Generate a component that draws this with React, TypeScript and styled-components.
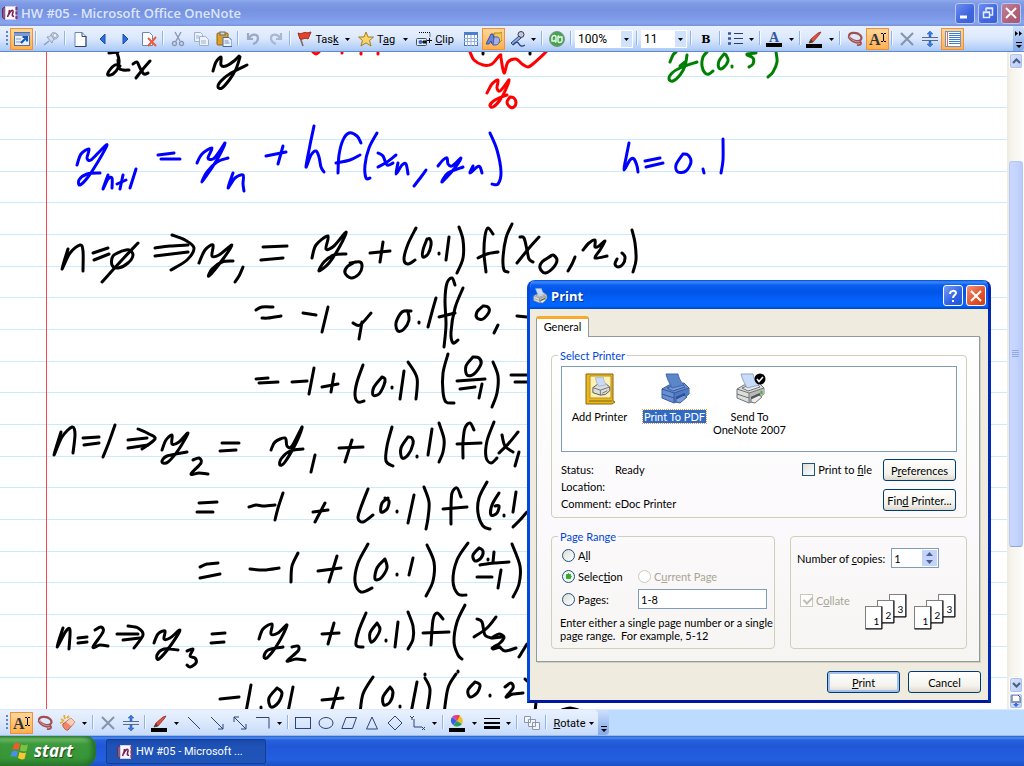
import React from 'react';
import styled, { createGlobalStyle } from 'styled-components';

const GlobalStyle = createGlobalStyle`
  * { box-sizing: border-box; }
  html, body { margin: 0; height: 100%; }
  body { overflow: hidden; background: #fff; }
  body, button, input, select { font-family: Roboto, "Liberation Sans", sans-serif; font-size: 11px; color: #000; }
  button { padding: 0; border: 0; background: none; }
  svg { display: block; flex: none; }
  u { text-underline-offset: 1px; }
`;

/* ---------- window frame ---------- */

const Page = styled.div`
  display: grid;
  grid-template-rows: 26px 26px minmax(0, 1fr) 27px 30px;
  min-width: 0;
  height: 100vh;
`;

const TitleBar = styled.header`
  display: flex;
  align-items: center;
  gap: 3px;
  padding: 0 3px 0 2px;
  background: linear-gradient(#8fa9ea 0, #7f9ce6 3px, #7691e0 10px, #7d99e8 17px, #86a6ee 23px, #7891dc 26px);
`;

const Title = styled.h1`
  flex: 1;
  margin: 0;
  font: 600 13px/18px "Open Sans", "Noto Sans", sans-serif;
  color: #dce6fb;
  white-space: nowrap;
`;

const CaptionButton = styled.button<{ $tone: 'pale' | 'blue' | 'dull' | 'red' }>`
  display: grid;
  place-items: center;
  width: 20px;
  height: 21px;
  border: 1px solid ${p => (p.$tone === 'pale' || p.$tone === 'dull' ? '#b8c8f2' : '#fff')};
  border-radius: 3px;
  background: ${p =>
    ({
      pale: 'linear-gradient(135deg, #6d8ef0, #3f66e0 60%, #3d62d2)',
      dull: 'linear-gradient(135deg, #c0829a, #b2607a 60%, #a4586e)',
      blue: 'linear-gradient(135deg, #7a9cf4, #2f61e4 60%, #2456d8)',
      red: 'linear-gradient(135deg, #f0917a, #e2512a 60%, #cf3f14)',
    })[p.$tone]};
`;

const CaptionButtons = styled.div`
  display: flex;
  gap: 3px;
`;

/* ---------- toolbars ---------- */

const ToolStrip = styled.div`
  display: flex;
  align-items: stretch;
  height: 26px;
  background: linear-gradient(#e9f1fe, #dbe8fc 50%, #b4d0f8 90%, #a8c6f2);
  border-bottom: 1px solid #5f8ace;
`;

const DrawStrip = styled(ToolStrip)`
  height: 27px;
  border-top: 1px solid #d9e9ff;
  border-bottom: 1px solid #9dbbe8;
  background: #bddaff;
`;

const DrawTools = styled.div`
  display: flex;
  border-radius: 0 4px 4px 0;
  background: linear-gradient(#e9f1fe, #dbe8fc 50%, #c6dbfa);
`;

const Grip = styled.span`
  flex: none;
  width: 4px;
  margin: 5px 0 5px 6px;
  background: repeating-linear-gradient(#5b86cc 0 2px, transparent 2px 4px) 0 0 / 2px 100% no-repeat;
`;

const Tool = styled.button<{ $w?: number; $on?: boolean }>`
  display: flex;
  flex: none;
  align-items: center;
  justify-content: center;
  gap: 3px;
  width: ${p => p.$w ?? 23}px;
  margin: 2px 0 1px;
  border: 1px solid ${p => (p.$on ? '#f0913a' : 'transparent')};
  background: ${p => (p.$on ? 'linear-gradient(#fed79a, #ffb04e)' : 'none')};
  white-space: nowrap;
`;

const Separator = styled.span`
  flex: none;
  width: 6px;
  margin: 5px 0 6px;
  background: linear-gradient(90deg, transparent 2px, #8fb4ea 2px 3px, #f5f9ff 3px 4px, transparent 4px);
`;

const DropWrap = styled.span<{ $w: number }>`
  position: relative;
  flex: none;
  width: ${p => p.$w}px;
  margin: 4px 1px 3px;
  background: #fff;
  svg {
    position: absolute;
    right: 4px;
    top: 8px;
    pointer-events: none;
  }
  &::after {
    content: '';
    position: absolute;
    inset: 1px 1px 1px auto;
    width: 11px;
    background: #cfe1fb;
    pointer-events: none;
  }
  svg { z-index: 1; }
`;

const DropSelect = styled.select`
  appearance: none;
  width: 100%;
  height: 100%;
  padding: 0 12px 0 3px;
  border: 0;
  background: transparent;
  font-size: 12px;
`;

const Overflow = styled.button<{ $push?: boolean }>`
  display: flex;
  flex-direction: column;
  align-items: center;
  justify-content: space-between;
  width: 11px;
  margin-left: ${p => (p.$push ? 'auto' : '0')};
  padding: 5px 0 3px;
  border-radius: 0 4px 4px 0;
  background: linear-gradient(#cfe0fb, #9dbdf0 60%, #86aae8);
`;

/* ---------- note page ---------- */

const Workspace = styled.main`
  position: relative;
  display: flex;
  min-height: 0;
`;

const Paper = styled.section`
  position: relative;
  flex: 1;
  min-width: 0;
  overflow: hidden;
  background:
    linear-gradient(90deg, transparent 46px, #f8484e 46px 47px, transparent 47px),
    linear-gradient(transparent 24px, #c9ebfd 24px 25px, transparent 25px 55px, #c9ebfd 55px 56px, transparent 56px 87px, #c9ebfd 87px 88px, transparent 88px) 0 0 / 100% 95px,
    #fff;
`;

const InkLayer = styled.svg`
  position: absolute;
  left: 0;
  top: 0;
`;

const ScrollBar = styled.div`
  display: flex;
  flex-direction: column;
  width: 17px;
  padding: 1px 1px 0 2px;
  background: linear-gradient(90deg, #eeeade, #f6f4ee 5px, #fdfdfb);
`;

const ScrollButton = styled.button`
  display: grid;
  flex: none;
  place-items: center;
  height: 16px;
  border: 1px solid #fff;
  border-radius: 3px;
  outline: 1px solid #aec2f0;
  outline-offset: -2px;
  background: linear-gradient(135deg, #dbe5fe, #b8cbf8);
`;

const ScrollTrack = styled.div`
  display: flex;
  flex-direction: column;
  flex: 1;
`;

const ScrollThumb = styled.div`
  display: grid;
  flex: 385;
  place-items: center;
  border: 1px solid #b4c8f6;
  border-bottom-color: #8ea6dc;
  border-radius: 3px;
  background: linear-gradient(90deg, #c9d8fd, #c3d3fd 60%, #b6c9fa);
`;

const TrackGap = styled.div<{ $share: number }>`
  flex: ${p => p.$share};
`;

/* ---------- print dialog ---------- */

const Dialog = styled.form`
  position: absolute;
  left: 527px;
  top: 228px;
  width: 464px;
  border: solid #0048e0;
  border-width: 0 3px 3px;
  border-right-color: #0028b4;
  border-bottom-color: #0018a0;
  border-radius: 8px 8px 0 0;
  background: #efebde;
  overflow: hidden;
  &, button, input { font-family: Lato, Roboto, sans-serif; }
`;

const DialogTitle = styled.div`
  display: flex;
  align-items: center;
  gap: 3px;
  height: 29px;
  margin: 0 -3px;
  padding: 2px 5px 0;
  background: linear-gradient(#0048d8 0, #3b8cf8 2px, #0a5ff0 5px, #0054e6 12px, #0462fc 20px, #0066ff 26px, #0042c4 29px);
`;

const DialogName = styled.h2`
  flex: 1;
  margin: 0;
  font: 700 13px/18px "Open Sans", "Noto Sans", sans-serif;
  color: #fff;
  text-shadow: 1px 1px #0a2f8c;
`;

const DialogBody = styled.div`
  padding: 7px 7px 7px 6px;
`;

const Tab = styled.button`
  position: relative;
  display: block;
  width: 53px;
  height: 21px;
  border: 1px solid #919b9c;
  border-top: 3px solid #f9a92b;
  border-bottom: 0;
  border-radius: 3px 3px 0 0;
  background: #fff;
  line-height: 13px;
  padding-bottom: 3px;
`;

const TabPanel = styled.div`
  display: flex;
  flex-direction: column;
  gap: 12px;
  margin: -1px 1px 0 0;
  padding: 12px 12px 12px 14px;
  border: 1px solid #919b9c;
  box-shadow: 1px 1px #d3cfc0;
  background: linear-gradient(#fff, #fbf9fb 60%, #f6f5f2);
`;

const Group = styled.fieldset<{ $w?: number }>`
  min-width: 0;
  width: ${p => (p.$w ? p.$w + 'px' : 'auto')};
  margin: 0;
  padding: 0 8px;
  border: 1px solid #d2cfb9;
  border-radius: 4px;
`;

const Legend = styled.legend`
  margin-left: -2px;
  padding: 0 2px;
  line-height: 13px;
  color: #0046d5;
`;

const PrinterList = styled.ul`
  display: flex;
  height: 86px;
  margin: 4px 1px 0;
  padding: 6px 0 0;
  border: 1px solid #7f9db9;
  background: #fff;
  list-style: none;
`;

const PrinterItem = styled.li`
  display: flex;
  flex-direction: column;
  align-items: center;
  gap: 5px;
  width: 75px;
`;

const PrinterName = styled.span<{ $on?: boolean }>`
  padding: 0 1px;
  line-height: 13px;
  text-align: center;
  color: ${p => (p.$on ? '#fff' : '#000')};
  background: ${p => (p.$on ? '#316ac5' : 'none')};
  outline: ${p => (p.$on ? '1px dotted #e0a040' : 'none')};
  white-space: pre;
`;

const PrinterInfo = styled.div`
  display: flex;
  align-items: flex-start;
  justify-content: space-between;
  padding: 7px 2px 5px 1px;
`;

const Facts = styled.dl`
  display: grid;
  flex: 1;
  grid-template-columns: 54px 1fr;
  grid-auto-rows: 17px;
  align-items: center;
  margin: 2px 0 0;
  dd { margin: 0; }
`;

const Stack = styled.div`
  display: flex;
  flex-direction: column;
  gap: 8px;
  margin-left: 11px;
`;

const PushButton = styled.button<{ $default?: boolean }>`
  width: 73px;
  height: 22px;
  border: 1px solid #003c74;
  border-radius: 3px;
  background: linear-gradient(#fff, #f3f2ec 70%, #dcd8cc);
  box-shadow: ${p => (p.$default ? 'inset 0 0 0 2px #a3bff0' : 'none')};
`;

const Choice = styled.label<{ $off?: boolean }>`
  display: flex;
  align-items: center;
  gap: 3px;
  color: ${p => (p.$off ? '#a8a594' : '#000')};
`;

const Radio = styled.input.attrs({ type: 'radio', name: 'range' })`
  appearance: none;
  flex: none;
  width: 13px;
  height: 13px;
  margin: 0;
  border: 1px solid #1f5283;
  border-radius: 50%;
  background: linear-gradient(135deg, #dcdcd5, #fff);
  &:checked { background: radial-gradient(circle, #2fae2b 0 2px, #4fc24a 3px, #f4f4f0 3px); }
  &:disabled { border-color: #cac8bb; background: #fff; }
`;

const Check = styled.input.attrs({ type: 'checkbox' })`
  appearance: none;
  flex: none;
  width: 13px;
  height: 13px;
  margin: 0;
  border: 1px solid #1c5180;
  background: linear-gradient(135deg, #dcdcd7, #fff);
  &:disabled { border-color: #cac8bb; background: #fff; }
  &:checked::before {
    content: '';
    display: block;
    width: 4px;
    height: 7px;
    margin: 0 0 0 4px;
    border: solid #c0bdae;
    border-width: 0 2px 2px 0;
    transform: rotate(45deg);
  }
`;

const PrintToFile = styled(Choice)`
  margin-top: 4px;
`;

const Bottom = styled.div`
  display: flex;
  align-items: flex-end;
  justify-content: space-between;
`;

const RangeGrid = styled.div`
  display: grid;
  grid-template-columns: 76px 1fr;
  grid-template-rows: 20px 22px 24px;
  align-items: center;
  padding: 2px 0 0 2px;
`;

const Field = styled.input`
  min-width: 0;
  height: 20px;
  padding: 0 2px;
  border: 1px solid #7f9db9;
  background: #fff;
`;

const PagesField = styled(Field)`
  width: 129px;
`;

const Hint = styled.p`
  margin: 5px 0 6px;
  line-height: 13px;
  white-space: pre;
`;

const CopiesGroup = styled(Group)`
  height: 113px;
  padding: 11px 10px 0 6px;
`;

const CopiesRow = styled.div`
  display: flex;
  align-items: center;
  gap: 6px;
`;

const Spinner = styled.span`
  display: flex;
  width: 48px;
  border: 1px solid #7f9db9;
  background: #fff;
`;

const SpinField = styled.input`
  width: 30px;
  height: 18px;
  padding: 0 2px;
  border: 0;
  background: none;
`;

const SpinButtons = styled.span`
  display: flex;
  flex-direction: column;
  margin: 1px 0;
`;

const SpinButton = styled.button`
  display: grid;
  place-items: center;
  width: 15px;
  height: 8px;
  background: #c3d3fb;
`;

const CollateRow = styled.div`
  display: flex;
  align-items: flex-start;
  justify-content: space-between;
  margin-top: 26px;
  padding-left: 3px;
`;

const PageStacks = styled.span`
  display: flex;
  gap: 7px;
`;

const Footer = styled.div`
  display: flex;
  justify-content: flex-end;
  gap: 8px;
  margin-top: 9px;
`;

/* ---------- taskbar ---------- */

const TaskBar = styled.footer`
  display: flex;
  align-items: stretch;
  background: linear-gradient(#2a5fcf 0, #4a8cf2 2px, #2762dc 4px, #2157d7 10px, #2260e0 24px, #1c4fc0 30px);
`;

const StartButton = styled.button`
  display: flex;
  align-items: center;
  gap: 4px;
  width: 96px;
  padding: 0 0 1px 10px;
  border-radius: 0 10px 12px 0;
  background: linear-gradient(#3a8a3a 0, #6cb866 3px, #3c9a3c 8px, #379537 22px, #2a7a2c 30px);
  box-shadow: inset -4px 0 5px #24702a;
  color: #fff;
  font: italic 700 17px/20px "Open Sans", sans-serif;
  text-shadow: 1px 1px 1px #1c4a1c;
`;

const TaskButton = styled.button`
  display: flex;
  align-items: center;
  gap: 3px;
  width: 160px;
  margin: 3px 0 2px 10px;
  padding-left: 10px;
  border: 1px solid #163d94;
  border-radius: 2px;
  background: linear-gradient(#1a48a8, #1e52b7 6px, #1f54b8);
  color: #fff;
`;

/* ---------- icons ---------- */

const icons: Record<string, React.ReactNode> = {
  onenote: (
    <>
      <path d="M0.500 3.500 4 1v14L.500 12.500z" fill="#8a5a86" stroke="#6a2c5c" />
      <rect x="3.500" y="1.500" width="10" height="13" fill="#fdfbff" stroke="#d8cce4" />
      <path d="M14.500 2v3M14.500 6.500v3M14.500 11v3" stroke="#8a3468" strokeWidth="2" />
      <path d="M5.500 12c1-2 2-4 2-7M6.500 10c2-5 5-6 4.500-3-.500 2-1.500 5 1 4" fill="none" stroke="#7a2050" strokeWidth="1.600" />
    </>
  ),
  nav: (
    <>
      <rect x="0.500" y="1.500" width="15" height="13" fill="#eaf0fb" stroke="#4c6eae" />
      <path d="M0 2h16v3H0z" fill="#7f9acb" />
      <path d="M2 8h5M2 11h5" stroke="#b8c6e0" strokeWidth="2" />
      <path d="m7 12 5-5M8.500 6H13v4.500" stroke="#1458b4" strokeWidth="2.200" fill="none" />
    </>
  ),
  pin: (
    <>
      <path d="m1 14 5-4" stroke="#8e9cb6" strokeWidth="1.500" />
      <path d="M4 6c2 0 3-1 4-2 0-2 2-3 4-2 2 0 4 3 3 4-1 2-2 2-4 2-1 1-1 2-2 4z" fill="#d3dbea" stroke="#8e9cb6" />
      <path d="m8 4 3 4" stroke="#8e9cb6" />
      <circle cx="12" cy="4.500" r="2" fill="#eef2f9" stroke="#9aa8c0" />
    </>
  ),
  page: (
    <>
      <path d="M3 1.500h7l4 4v10H3z" fill="#fdfeff" stroke="#6b86b5" />
      <path d="M10 1.500v4h4M14 5v10.500H3" fill="none" stroke="#30466e" />
    </>
  ),
  prev: <path d="M10 3v10L5 8z" fill="#2c6ce0" stroke="#1c4fb4" />,
  next: <path d="M5 3v10l5-5z" fill="#2c6ce0" stroke="#1c4fb4" />,
  delPage: (
    <>
      <path d="M1.500 1.500h7l3 3v10h-10z" fill="#fdfeff" stroke="#6b86b5" />
      <path d="m7 7 8 8M15 6l-8 9" stroke="#ee5a3c" strokeWidth="2" />
    </>
  ),
  cut: (
    <g fill="none" stroke="#8b99b3" strokeWidth="1.400">
      <path d="m5 1 5 9M11 1 6 10" />
      <circle cx="4.500" cy="12.500" r="2" />
      <circle cx="11.500" cy="12.500" r="2" />
    </g>
  ),
  copy: (
    <g fill="#eef3fb" stroke="#9fb0cc">
      <path d="M1.500 1.500h6l2 2v7h-8z" />
      <path d="M6.500 5.500h6l3 3v6h-9z" />
      <path d="M8 10h5M8 12h5M3 5h3M3 7h3" />
    </g>
  ),
  paste: (
    <>
      <rect x="1" y="2" width="11" height="12" rx="1" fill="#d9a02c" stroke="#94660c" />
      <rect x="4" y="1" width="5" height="3" fill="#d8d8d8" stroke="#6a6a6a" />
      <path d="M7 6.500h6l3 3v6H7z" fill="#eef4ff" stroke="#4a68a4" />
      <path d="M8.500 10h4M8.500 12h5" stroke="#6f8cc0" />
    </>
  ),
  undo: <path d="M3 2v6h5M4 7c3-5 9-4 9 0 0 3-2 5-5 6" fill="none" stroke="#9aaac6" strokeWidth="2.200" />,
  redo: <path d="M13 2v6H8M12 7C9 2 3 3 3 7c0 3 2 5 5 6" fill="none" stroke="#a9b8d2" strokeWidth="2.200" />,
  flag: (
    <>
      <path d="m3 3 4 12" stroke="#7a6a64" strokeWidth="1.600" />
      <path d="M2 2c4 2 6-2 9 0l4-1-3 7c-3-2-5 1-8 0z" fill="#e2442c" stroke="#a82818" />
    </>
  ),
  star: <path d="m8 1 2 5h5.500l-4 3.500L13 15l-5-3.200L3 15l1.500-5.500L.500 6H6z" fill="#fad56a" stroke="#a87c20" />,
  clip: (
    <>
      <path d="M3 1.500h11v5" fill="none" stroke="#000" strokeDasharray="1 1" />
      <rect x="0.500" y="7.500" width="10" height="7" rx="1" fill="#e7ecf6" stroke="#44506a" />
      <circle cx="4.500" cy="11" r="2" fill="#2e6cc0" />
      <path d="M7 10h3v2H7zM11 9.500h5M13.500 7v5" fill="#333" stroke="#000" />
    </>
  ),
  table: (
    <>
      <rect x="1.500" y="1.500" width="13" height="13" fill="#fff" stroke="#4c74bc" />
      <path d="M1 1h14v3H1z" fill="#4c7ed0" />
      <path d="M1 7.500h14M1 10.500h14M4.500 4v11M8 4v11M11.500 4v11" stroke="#93b0e0" />
    </>
  ),
  shapes: (
    <>
      <path d="M8 2h6l2-1v8l-3 3H8z" fill="#f2c94e" stroke="#b08a20" />
      <path d="m0 13 5-10h2l2 10H6l-1-3-2 3z" fill="#6b86dc" stroke="#3b4f9e" />
      <path d="M8 6h3c4 0 3 8-1 8H7z" fill="#a3b2ea" stroke="#4a5ca8" />
    </>
  ),
  mic: (
    <>
      <circle cx="12" cy="3.500" r="3" fill="#c2c8d4" stroke="#353f56" />
      <path d="m10 5-8 7 2 2 8-7z" fill="#8fa8d8" stroke="#2c4784" />
      <path d="M4 14c3-4 5-3 6-1s3 3 6 1" fill="none" stroke="#2c4784" strokeWidth="1.400" />
    </>
  ),
  sync: (
    <>
      <circle cx="8" cy="8" r="7.500" fill="#46a252" stroke="#7c9480" />
      <path d="M3 6c1-2 4-2 4 0v5M5 9l2 2.500M3 6v4h2M13 10c-1 2-4 2-4 0V5M11 7 9 4.500M13 10V6h-2" fill="none" stroke="#e8ffe8" strokeWidth="1.400" />
    </>
  ),
  bullets: (
    <>
      <path d="M1 2.500h3M1 7.500h3M1 12.500h3" stroke="#34589c" strokeWidth="2.500" />
      <path d="M7 2.500h9M7 7.500h9M7 12.500h9" stroke="#2b3e66" />
    </>
  ),
  lasso: (
    <g fill="none">
      <path d="M13 11c-4 2-11-2-11-6s8-4 11-1 1 7-4 6-5-3-8-4" stroke="#a05050" strokeWidth="2.200" />
      <path d="M12 10c3 1 3 5-2 4" stroke="#a05050" strokeWidth="1.800" />
      <path d="M12.500 10.500c-4 1-10-2-10-5.500" stroke="#d69a94" />
    </g>
  ),
  cross: <path d="m2 2 12 12M14 2 2 14" stroke="#8593ac" strokeWidth="2" />,
  split: (
    <>
      <path d="M0 6.500h16M0 9.500h16" stroke="#5a6a8a" />
      <path d="m8 0 3 3H9v3H7V3H5zM8 16l3-3H9v-3H7v3H5z" fill="#3a7ae0" stroke="#2458b0" strokeWidth=".5" />
    </>
  ),
  ruled: (
    <>
      <rect x="0.500" y="0.500" width="15" height="15" fill="#fff" stroke="#6f92cc" />
      <path d="M4 2.500h11M4 4.500h11M4 6.500h11M4 8.500h11M4 10.500h11M4 12.500h11" stroke="#3a7ed8" />
      <path d="M2.500 1v14" stroke="#e06a5a" />
    </>
  ),
  eraser: (
    <>
      <path d="m3 9 8-6 4 4-7 8c-2 1-6-3-5-6z" fill="#f2866a" stroke="#c0583c" />
      <path d="m6 7 5-4 4 4-4 4z" fill="#fbcdb8" />
      <path d="m1 4 3 2M4 0l1 4M0 8l3-1M9 1 7 3" stroke="#e8b020" strokeWidth="1.800" />
    </>
  ),
  line: <path d="m2 2 12 12" stroke="#2b4476" />,
  arrowLine: <path d="m2 2 12 12M14 9v5H9" fill="none" stroke="#2b4476" />,
  doubleArrow: <path d="m2 2 12 12M14 9v5H9M2 7V2h5" fill="none" stroke="#2b4476" />,
  elbow: <path d="M1 2.500h13v11" fill="none" stroke="#2b4476" />,
  rect: <rect x="0.500" y="2.500" width="15" height="11" fill="none" stroke="#2b4476" />,
  ellipse: <ellipse cx="8" cy="8" rx="7" ry="5.500" fill="none" stroke="#2b4476" />,
  para: <path d="M5 2.500h10.500l-4 11H.800z" fill="none" stroke="#2b4476" />,
  triangle: <path d="m8 2 5.500 12h-11z" fill="none" stroke="#2b4476" />,
  diamond: <path d="m8 1 7 7-7 7-7-7z" fill="none" stroke="#2b4476" />,
  axes: <path d="M4 4v8h8M0 1l2 2 2-2M2 3v2M12 12l3 3M15 12l-3 3" fill="none" stroke="#2b4476" />,
  weights: (
    <>
      <path d="M0 3.500h16" stroke="#000" />
      <path d="M0 8h16" stroke="#000" strokeWidth="2" />
      <path d="M0 12.500h16" stroke="#000" strokeWidth="3" />
    </>
  ),
  group: (
    <g fill="#f0f4fb" stroke="#8d97a8">
      <path d="M.500 1.500h6v6h-6zM4.500 4.500h7v7h-7zM8.500 7.500h7v7h-7z" />
    </g>
  ),
};

const Icon = ({ name, size = 16 }: { name: string; size?: number }) => (
  <svg width={size} height={size} viewBox="0 0 16 16" aria-hidden="true">
    {icons[name]}
  </svg>
);

const FontColor = () => (
  <svg width="17" height="20" viewBox="0 0 17 20" aria-hidden="true">
    <text x="8" y="13" textAnchor="middle" fontFamily="Liberation Serif, serif" fontWeight="700" fontSize="14" fill="#34589c">A</text>
    <path d="M0 14h16v4H0z" />
  </svg>
);

const Pen = () => (
  <svg width="17" height="17" viewBox="0 0 17 17" aria-hidden="true">
    <path d="m3 12 2-4 7-6 3-1-2 3-6 7z" fill="#e4503c" stroke="#8c3024" strokeWidth=".8" />
    <path d="m3 12 2-4 2 3z" fill="#4b3a36" />
    <path d="M0 13h16v4H0z" />
  </svg>
);

const Palette = () => (
  <svg width="17" height="17" viewBox="0 0 17 17" aria-hidden="true">
    <path d="M8 6V0a6 6 0 0 1 5 9z" fill="#f0c030" />
    <path d="M8 6 13 9a6 6 0 0 1-9 1z" fill="#2c9c5c" />
    <path d="M8 6 4 10a6 6 0 0 1-1-8z" fill="#3a5ee0" />
    <path d="M8 6 3 2a6 6 0 0 1 5-2z" fill="#e040a0" />
    <path d="M8 6 11 .500a6 6 0 0 0-3-.500z" fill="#e84828" />
    <path d="M0 13h16v4H0z" />
  </svg>
);

const TextTool = () => (
  <svg width="18" height="18" viewBox="0 0 18 18" aria-hidden="true">
    <text x="0" y="15" fontFamily="Liberation Serif, serif" fontWeight="700" fontSize="16" fill="#30343c">A</text>
    <path d="M12 3.500h2M15 3.500h2M14.500 4v7M12 11.500h2M15 11.500h2" stroke="#000" />
  </svg>
);

const BoldTool = () => (
  <svg width="14" height="16" viewBox="0 0 14 16" aria-hidden="true">
    <text x="7" y="12" textAnchor="middle" fontFamily="DejaVu Serif, serif" fontWeight="700" fontSize="11">B</text>
  </svg>
);

const DownMark = () => (
  <svg width="5" height="3" viewBox="0 0 5 3" aria-hidden="true">
    <path d="M0 0h5L2.500 3z" />
  </svg>
);

const Arrow = ({ label }: { label: string }) => (
  <Tool $w={11} type="button" aria-label={label}>
    <DownMark />
  </Tool>
);

const Chevron = ({ up, size = 9 }: { up?: boolean; size?: number }) => (
  <svg width={size} height={size - 3} viewBox="0 0 9 6" aria-hidden="true">
    <path d={up ? 'M1 5l3.500-3.500L8 5' : 'M1 1l3.500 3.500L8 1'} fill="none" stroke="#4d6185" strokeWidth="2.200" />
  </svg>
);

const SpinMark = ({ up }: { up?: boolean }) => (
  <svg width="7" height="4" viewBox="0 0 7 4" aria-hidden="true">
    <path d={up ? 'M0 4 3.500 0 7 4z' : 'M0 0h7L3.500 4z'} fill="#4d6185" />
  </svg>
);

const Windows = () => (
  <svg width="20" height="18" viewBox="0 0 20 18" aria-hidden="true">
    <path d="M4 2c3-2 4-1 6 0L8.500 8c-2-1-4-1-6 0z" fill="#ee5a2a" />
    <path d="M11 2.500c3 1 4 1 7 0L16.500 9c-3 1-5 0-6.500-.500z" fill="#7fc242" />
    <path d="M2 9.500c3-1 4-1 6 0L6.500 15c-2-1-4-1-6 0z" fill="#4a8ef0" />
    <path d="M9.500 10c2 1 4 1.500 6.500.500L14.500 17c-3 1-4 0-6.500-1z" fill="#fbc72c" />
  </svg>
);

const tones = {
  grey: { paper: '#c8dcfa', paperEdge: '#8fa6c8', top: '#ecece9', side: '#b9bab8', front: '#dcdcda', edge: '#707478', tray: '#505458' },
  blue: { paper: '#5b86c8', paperEdge: '#3f66b0', top: '#7a9bd6', side: '#4f7abf', front: '#6a8fd0', edge: '#345a9f', tray: '#2c509c' },
};

const Printer = ({ tone = 'grey', size = 32 }: { tone?: 'grey' | 'blue'; size?: number }) => {
  const c = tones[tone];
  return (
    <svg width={size} height={size} viewBox="0 0 32 32" aria-hidden="true">
      <path d="m3 16 7-4 15-2 5 5v6l-8 6-7 3-12-5z" fill={c.front} stroke={c.edge} />
      <path d="m15 20 15-5v6l-7 6-8 2z" fill={c.side} />
      <path d="m3 16 12 4 15-5M15 20v9M3 21l12 4" fill="none" stroke={c.edge} />
      <path d="m8 15 5-2 10-2 3 3-12 4z" fill={c.top} stroke={c.edge} />
      <path d="M7 1h12c1 4 2 7 6 11l-12 3C11 11 8 6 7 1z" fill={c.paper} stroke={c.paperEdge} />
      <path d="m17 26 8-4 3 2-7 6-4-1z" fill={c.top} stroke={c.edge} />
      <path d="m17 25 9-4" stroke={c.tray} strokeWidth="2" />
      {tone === 'grey' && <path d="M27.500 18v3" stroke="#35b835" strokeWidth="2" />}
    </svg>
  );
};

const AddPrinter = () => (
  <svg width="32" height="32" viewBox="0 0 32 32" aria-hidden="true">
    <path d="M2 1h27v27l2 1-3 2H2z" fill="#e8b820" stroke="#8a6408" />
    <path d="M6 3h21v22H6z" fill="#fff0b4" stroke="#b8901c" />
    <path d="M5 28h23" stroke="#8a6408" />
    <svg x="7" y="4" width="20" height="20" viewBox="0 0 32 32">
      <path d="m3 17 7-5 14-1 6 5v6l-7 6-8 1-12-4z" fill="#dcdcd8" stroke="#55585c" strokeWidth="1.500" />
      <path d="m3 17 12 4 15-5M15 21v8M18 26l8-4" fill="none" stroke="#6c7076" strokeWidth="1.500" />
      <path d="M7 1h13c0 4 1 7 5 11l-12 3C9 11 8 6 7 1z" fill="#c8dcfa" stroke="#8fa6c8" />
    </svg>
  </svg>
);

const DefaultPrinter = () => (
  <svg width="32" height="32" viewBox="0 0 32 32" aria-hidden="true">
    <Printer />
    <circle cx="26" cy="6" r="5.500" fill="#000" />
    <path d="m23 6 2 2.500L29 4" fill="none" stroke="#fff" strokeWidth="1.600" />
  </svg>
);

const CollatedPages = () => (
  <svg width="42" height="36" viewBox="0 0 42 36" role="img" aria-label="Pages 1, 2, 3">
    {[3, 2, 1].map(n => {
      const x = (n - 1) * 12 + 0.5;
      const y = (3 - n) * 6 + 0.5;
      return (
        <g key={n}>
          <rect x={x} y={y} width="16" height="22" fill="#fff" stroke="#808080" />
          <path d={`M${x} ${y + 22.5}h16.500v-22.500`} fill="none" stroke="#000" />
          <text x={x + 11} y={y + 18} textAnchor="middle" fontSize="10">{n}</text>
        </g>
      );
    })}
  </svg>
);

/* ---------- handwriting ---------- */

type Note = { color: string; label: string; ink: string };

// Pen strokes as "x y x y ..." point lists; a slash lifts the pen.
const notes: Note[] = [
  {
    color: '#000',
    label: 'dx, y',
    ink:
      '109 53 118 52/120 66 115 65 109 71 108 75 113 74 118 68 119 60 117 53/118 60 119 68 123 70 129 70/133 64 137 62 140 68 144 74 148 73/150 61 143 69 136 78' +
      '/213 71 216 62 221 57 221 65 226 66 234 61 239 56/240 57 236 69 230 79 222 88 218 87 221 81 231 73 247 65/483 53/530 53',
  },
  {
    color: '#f00',
    label: 'y sub 0',
    ink:
      '313 52 316 54 319 52/342 52/361 53/378 53/470 52 474 60 483 65 492 64 500 55 501 58 504 73 508 62 516 59 522 64 528 67 534 63 546 52' +
      '/487 93 492 84 498 80 497 88 500 91 506 84 509 80 506 89 500 100 493 107 490 105 495 100 507 95/510 97 507 102 510 107 514 107 516 103 514 98 510 97',
  },
  {
    color: '#008000',
    label: 'y(0.5)',
    ink:
      '670 62 673 55 676 52/687 55 685 66 680 75 673 81 669 79 672 73 680 68 697 62/680 66 685 62/707 52 703 57 702 66 705 73 709 74 713 71' +
      '/724 54 719 61 719 68 723 68 728 61 726 55 724 54/732 66/747 54 756 53/747 55 753 58 753 64 749 67/776 52 777 62 773 72 768 77',
  },
  {
    color: '#00f',
    label: 'y sub n+1 = y sub n + h f(x sub n, y sub n), h = 0.1',
    ink:
      '77 165 81 154 89 149 87 158 91 160 101 150 107 145 99 160 88 177 80 185 79 180 87 174 100 173/108 175 103 189 108 179 112 178 112 188/123 175 120 189/117 184 126 180/136 169 130 188' +
      '/158 155 174 153/161 159 180 159/197 163 202 154 212 148 208 158 213 159 219 152 225 143 218 158 209 172 202 182 207 172 217 162 228 158/233 173 228 188 235 178 243 175 243 184 244 191' +
      '/266 156 286 152/283 146 278 164/314 126 310 145 306 167 311 155 316 151 319 157 321 167 324 172/361 143 357 136 349 133 343 140 339 155 338 173/336 163 350 160 360 155' +
      '/377 133 369 148 365 165 366 178 370 178/378 153 383 156 387 165 393 163/396 155 387 162 378 167/398 163 396 174 402 165 406 164 408 174/426 170 421 177 414 186' +
      '/438 166 443 160 447 158 448 164 452 166 461 158 454 169 442 182 448 173 463 167/473 166 470 173 477 167 480 167 482 173/490 133 497 150 501 172 498 184 492 184' +
      '/629 143 626 158 624 170 630 160 634 159 637 166 638 172/645 161 660 158/646 167 663 163/683 154 676 165 678 172 686 171 691 162 688 155 683 154/703 169 704 173/723 139 723 160 721 173',
  },
  {
    color: '#000',
    label: 'n = 0 implies y sub 1 = y sub 0 + (0.1) f(x sub 0, y sub 0)',
    ink:
      '68 249 62 269 70 253 80 245 83 251 83 271/93 253 108 248/94 260 109 254/122 251 113 256 112 265 118 268 128 263 133 255 129 250 122 251/138 243 121 261 102 282' +
      '/155 248 170 246 188 245/155 256 188 252/172 235 185 240 194 248 187 260 171 270/199 263 205 250 213 245 212 256 219 255 232 245 223 259 209 276 212 269 222 262 233 261' +
      '/243 267 239 276 235 282/263 247 287 246/261 260 283 258/312 258 316 245 328 236 326 249 334 246 346 232 340 246 329 263 319 271 324 262 334 255 346 254' +
      '/355 262 347 267 345 273 351 278 359 274 362 267 360 262 350 263/370 253 390 251/383 242 380 262/416 228 408 244 404 259 408 264 415 260/427 239 423 250 423 257 428 254 431 245 430 239 427 239/439 253/449 237 446 260' +
      '/459 227 463 240 463 258 457 273/493 234 488 228 485 236 484 253 486 272/478 258 487 254 498 252/512 224 506 238 503 258 504 270 508 272/520 237 524 238 527 250 529 259 533 262/539 237 530 247 517 263' +
      '/551 256 542 262 540 268 545 273 553 268 557 260 553 255 549 257/575 257 572 264 568 271/583 250 589 243 595 240 595 247 599 246 605 241 600 250 595 258 607 256/622 253 625 257 623 264 618 267 615 264 617 259/632 230 635 243 636 260 633 272',
  },
  {
    color: '#000',
    label: '= -1 + 0.1 f(0, -',
    ink:
      '256 310 262 307 273 307/262 318 268 318 281 316/303 313 316 315/328 307 322 332/353 323 360 325 371 313/362 322 359 339/411 311 402 312 396 323 398 331 404 329 409 320 408 312/419 322/436 298 432 312 428 327' +
      '/455 285 452 278 447 283 445 300 446 325 444 347/439 317 455 313/463 288 455 308 451 332 453 343 458 340/483 306 477 312 477 318 483 319 489 312 488 307 483 306/498 325 494 333/517 316 527 317',
  },
  {
    color: '#000',
    label: '= -1 + (0.1) (0 over -1) =',
    ink:
      '256 379 268 378/259 383 278 382/292 382 307 381/314 368 309 394/322 387 338 384/334 374 331 392/363 365 357 382 355 395 358 402 364 401/382 377 374 387 373 395 379 394 384 385 385 379 382 377/392 387/404 371 400 399/408 362 417 378 416 399' +
      '/448 354 443 373 443 392 446 402 454 403/473 357 466 366 467 375 474 374 481 364 479 358 473 357/457 381 485 379/460 389 475 387/482 384 479 398/493 362 498 376 497 393 492 407/511 375 527 375/515 382 527 382',
  },
  {
    color: '#000',
    label: 'n = 1 implies y sub 2 = y sub 1 + (0.1) f(x sub 1,',
    ink:
      '61 432 54 455 62 437 72 427 75 434 73 453/83 438 99 437/84 445 99 443/115 425 109 442 103 457/128 440 147 438/128 448 148 445/138 429 149 434 155 439 142 449/162 450 166 440 172 435 172 444 179 442 188 433 179 449 168 462 162 462 167 456 187 452' +
      '/193 460 199 458 201 463 191 474 199 473 208 474/222 443 239 443/220 451 236 450/271 450 275 442 285 438 287 446 292 446 302 427 297 441 285 462 280 465 281 459 290 451 303 449/315 455 311 472/339 448 363 447/352 440 345 462' +
      '/392 427 387 446 386 461 393 466/408 437 401 448 402 458 408 455 413 444 412 438 408 437/417 456/432 429 428 455/439 423 444 439 443 452 439 462/474 430 470 423 465 428 463 442 463 458/457 444 481 443' +
      '/494 422 487 441 486 457 491 463 497 458/502 435 505 446 513 452/518 432 509 443 499 453/519 452 515 466',
  },
  {
    color: '#000',
    label: '= -1 + (0.1) f(0.1,',
    ink:
      '199 503 217 502/197 512 213 512/249 507 256 505 264 506 275 505/283 493 278 508 275 520/313 512 328 510/325 503 315 522/368 489 361 507 358 518 363 522 373 515/388 498 382 503 381 512 387 509 389 501 385 498/397 511/414 495 408 523' +
      '/424 487 429 502 428 518 426 529/461 497 457 488 452 493 451 508 451 524/443 509 467 507/487 482 479 498 478 513 483 526 490 529/499 493 492 505 491 515 497 513 499 506 495 506/504 515/516 492 513 512/527 512 520 520 513 527',
  },
  {
    color: '#000',
    label: '= -1 + (0.1) (0.1 over -1)',
    ink:
      '200 567 207 564 218 563/200 578 220 574/250 569 264 570 279 568/298 553 292 566 291 582/318 571 341 568/337 556 329 582/368 544 358 563 355 582 361 592 372 588/385 559 377 568 375 579 381 578 387 568 385 559/397 574/413 558 409 575' +
      '/427 545 434 562 433 581 426 596/468 543 457 560 453 581 458 594 466 595/479 548 473 555 475 561 481 558 483 551 479 548/488 559/494 552 493 562/480 565 494 563 509 562/477 577 492 577/501 570 498 588/512 544 520 566 519 584 513 597',
  },
  {
    color: '#000',
    label: 'n = 2 implies y sub 3 = y sub 2 + (0.1) f(x sub 2,',
    ink:
      '63 628 57 647 66 631 70 630 69 649/78 638 87 637/78 643 87 642/95 630 101 627 103 632 93 647 100 645 108 646/117 634 138 634/123 640 140 638/128 626 138 628 143 635 134 648/154 643 158 634 165 631 164 639 170 638 180 630 171 645 159 659 157 655 164 649 178 650' +
      '/187 651 193 649 190 656 195 658 196 663 190 667 187 665/212 634 225 633/211 643 224 642/259 639 263 629 272 624 271 634 278 633 287 625 279 642 268 657 264 657 268 650 283 647/292 647 298 646 298 651 287 661 296 659 305 660' +
      '/322 634 339 633/334 623 328 644/366 613 359 630 356 645 363 647/377 623 370 633 371 642 376 638 380 629 377 623/386 640/398 622 395 647/408 612 413 626 413 639 408 649/443 619 437 613 433 620 431 645/423 633 449 632' +
      '/465 605 457 622 454 642 458 655 462 659/477 619 482 622 485 635 492 638/496 617 487 628 474 637/493 637 499 634 504 637 500 643 492 648 499 647 505 651 516 648/493 638 502 637/493 649 500 647/527 644 519 657',
  },
  {
    color: '#000',
    label: '-1.01 + (0.1)(0.2',
    ink:
      '220 699 239 697/251 685 246 712/261 707/277 688 269 698 271 707 278 703 282 693 277 688/293 687 288 712/322 700 343 698/338 688 331 712/373 677 363 694 360 714/390 687 383 697 384 705 390 702 393 692 390 687/400 706/417 682 411 713' +
      '/425 674/425 678 430 690 427 712/458 671/456 674 448 688 444 714/475 682 468 690 470 697 477 693 480 685 475 682/490 695/505 687 511 683 513 688 506 697 513 694 523 693/525 679 527 681/536 702 535 712/562 710 570 708 578 710',
  },
];

const toPath = (stroke: string) => {
  const n = stroke.trim().split(/\s+/).map(Number);
  const pts: [number, number][] = [];
  for (let i = 0; i < n.length; i += 2) pts.push([n[i], n[i + 1]]);
  let d = `M${pts[0][0]} ${pts[0][1]}`;
  if (pts.length === 1) return d + 'l0 1';
  for (let i = 0; i < pts.length - 1; i++) {
    const a = pts[Math.max(i - 1, 0)];
    const b = pts[i];
    const c = pts[i + 1];
    const e = pts[Math.min(i + 2, pts.length - 1)];
    d += `C${b[0] + (c[0] - a[0]) / 6} ${b[1] + (c[1] - a[1]) / 6} ${c[0] - (e[0] - b[0]) / 6} ${c[1] - (e[1] - b[1]) / 6} ${c[0]} ${c[1]}`;
  }
  return d;
};

const Handwriting = () => (
  <InkLayer width="1007" height="657" viewBox="0 52 1007 657" fill="none" strokeWidth="3" strokeLinecap="round" strokeLinejoin="round">
    {notes.map(note => (
      <g key={note.label} role="img" aria-label={note.label} stroke={note.color}>
        {note.ink.split('/').map((s, i) => (
          <path key={i} d={toPath(s)} />
        ))}
      </g>
    ))}
  </InkLayer>
);

/* ---------- sections ---------- */

const T = ({ icon, label, on }: { icon: string; label: string; on?: boolean }) => (
  <Tool type="button" aria-label={label} $on={on}>
    <Icon name={icon} />
  </Tool>
);

const MainToolbar = () => (
  <ToolStrip role="toolbar" aria-label="Standard">
    <Grip />
    <T icon="nav" label="Full page view" on />
    <Separator />
    <T icon="pin" label="Pin" />
    <Separator />
    <T icon="page" label="New page" />
    <T icon="prev" label="Back" />
    <T icon="next" label="Forward" />
    <T icon="delPage" label="Delete page" />
    <Separator />
    <T icon="cut" label="Cut" />
    <T icon="copy" label="Copy" />
    <T icon="paste" label="Paste" />
    <Separator />
    <T icon="undo" label="Undo" />
    <T icon="redo" label="Redo" />
    <Separator />
    <Tool type="button" $w={49}><Icon name="flag" /><span>Tas<u>k</u></span></Tool>
    <Arrow label="Task options" />
    <Tool type="button" $w={47}><Icon name="star" /><span>T<u>a</u>g</span></Tool>
    <Arrow label="Tag options" />
    <Tool type="button" $w={48}><Icon name="clip" /><span><u>C</u>lip</span></Tool>
    <T icon="table" label="Table" />
    <T icon="shapes" label="Drawing toolbar" on />
    <T icon="mic" label="Record" />
    <Arrow label="Record options" />
    <Separator />
    <T icon="sync" label="Sync" />
    <Separator />
    <DropWrap $w={58}>
      <DropSelect aria-label="Zoom" defaultValue="100%"><option>100%</option></DropSelect>
      <DownMark />
    </DropWrap>
    <Separator />
    <DropWrap $w={46}>
      <DropSelect aria-label="Font size" defaultValue="11"><option>11</option></DropSelect>
      <DownMark />
    </DropWrap>
    <Separator />
    <Tool type="button" aria-label="Bold"><BoldTool /></Tool>
    <Separator />
    <T icon="bullets" label="Bullets" />
    <Arrow label="Bullet options" />
    <Separator />
    <Tool type="button" aria-label="Font color"><FontColor /></Tool>
    <Arrow label="Font color options" />
    <Separator />
    <Tool type="button" aria-label="Pen"><Pen /></Tool>
    <Arrow label="Pen options" />
    <Separator />
    <T icon="lasso" label="Lasso" />
    <Tool type="button" aria-label="Type" $on><TextTool /></Tool>
    <Separator />
    <T icon="cross" label="Delete" />
    <T icon="split" label="Insert space" />
    <T icon="ruled" label="Rule lines" on />
    <Overflow type="button" aria-label="More buttons" $push>
      <svg width="8" height="5" viewBox="0 0 8 5"><path d="M0 0v5l3-2.500zM4 0v5l3-2.500z" /></svg>
      <svg width="6" height="6" viewBox="0 0 6 6"><path d="M0 0h6v1H0zM0 3h6L3 6z" /></svg>
    </Overflow>
  </ToolStrip>
);

const DrawToolbar = () => (
  <DrawStrip role="toolbar" aria-label="Drawing">
    <DrawTools>
      <Grip />
      <Tool type="button" aria-label="Type" $on><TextTool /></Tool>
      <T icon="lasso" label="Lasso" />
      <T icon="eraser" label="Eraser" />
      <Arrow label="Eraser options" />
      <Separator />
      <T icon="cross" label="Delete" />
      <T icon="split" label="Insert space" />
      <Separator />
      <Tool type="button" aria-label="Pen"><Pen /></Tool>
      <Arrow label="Pen options" />
      <T icon="line" label="Line" />
      <T icon="arrowLine" label="Arrow" />
      <T icon="doubleArrow" label="Double arrow" />
      <T icon="elbow" label="Connector" />
      <Arrow label="Connector options" />
      <Separator />
      <T icon="rect" label="Rectangle" />
      <T icon="ellipse" label="Ellipse" />
      <T icon="para" label="Parallelogram" />
      <T icon="triangle" label="Triangle" />
      <T icon="diamond" label="Diamond" />
      <T icon="axes" label="Axes" />
      <Arrow label="Axes options" />
      <Separator />
      <Tool type="button" aria-label="Color"><Palette /></Tool>
      <Arrow label="Color options" />
      <T icon="weights" label="Thickness" />
      <Arrow label="Thickness options" />
      <Separator />
      <T icon="group" label="Duplicate" />
      <Separator />
      <Tool type="button" $w={49}><span><u>R</u>otate</span><DownMark /></Tool>
    </DrawTools>
    <Overflow type="button" aria-label="More buttons">
      <span />
      <svg width="6" height="6" viewBox="0 0 6 6"><path d="M0 0h6v1H0zM0 3h6L3 6z" /></svg>
    </Overflow>
  </DrawStrip>
);

const PrintDialog = () => (
  <Dialog role="dialog" aria-label="Print" onSubmit={e => e.preventDefault()}>
    <DialogTitle>
      <Printer size={16} />
      <DialogName>Print</DialogName>
      <CaptionButtons>
        <CaptionButton type="button" aria-label="Help" $tone="blue">
          <svg width="12" height="14" viewBox="0 0 12 14">
            <path d="M3 5c0-4 6-4 6-1 0 2-3 2-3 5M6 11v2" fill="none" stroke="#fff" strokeWidth="2" />
          </svg>
        </CaptionButton>
        <CaptionButton type="button" aria-label="Close" $tone="red">
          <svg width="12" height="12" viewBox="0 0 12 12"><path d="m1 1 10 10M11 1 1 11" stroke="#fff" strokeWidth="2" /></svg>
        </CaptionButton>
      </CaptionButtons>
    </DialogTitle>
    <DialogBody>
      <Tab type="button" role="tab" aria-selected>General</Tab>
      <TabPanel role="tabpanel">
        <Group>
          <Legend>Select Printer</Legend>
          <PrinterList>
            <PrinterItem><AddPrinter /><PrinterName>Add Printer</PrinterName></PrinterItem>
            <PrinterItem><Printer tone="blue" /><PrinterName $on>Print To PDF</PrinterName></PrinterItem>
            <PrinterItem><DefaultPrinter /><PrinterName>{'Send To\nOneNote 2007'}</PrinterName></PrinterItem>
          </PrinterList>
          <PrinterInfo>
            <Facts>
              <dt>Status:</dt><dd>Ready</dd>
              <dt>Location:</dt><dd />
              <dt>Comment:</dt><dd>eDoc Printer</dd>
            </Facts>
            <PrintToFile><Check /><span>Print to <u>f</u>ile</span></PrintToFile>
            <Stack>
              <PushButton type="button">P<u>r</u>eferences</PushButton>
              <PushButton type="button">Fin<u>d</u> Printer...</PushButton>
            </Stack>
          </PrinterInfo>
        </Group>
        <Bottom>
          <Group $w={224}>
            <Legend>Page Range</Legend>
            <RangeGrid>
              <Choice><Radio /><span>A<u>l</u>l</span></Choice>
              <span />
              <Choice><Radio defaultChecked /><span>Selec<u>t</u>ion</span></Choice>
              <Choice $off><Radio disabled /><span>C<u>u</u>rrent Page</span></Choice>
              <Choice><Radio /><span>Pa<u>g</u>es:</span></Choice>
              <PagesField aria-label="Pages" defaultValue="1-8" />
            </RangeGrid>
            <Hint>{'Enter either a single page number or a single\npage range.  For example, 5-12'}</Hint>
          </Group>
          <CopiesGroup $w={177}>
            <CopiesRow>
              <label htmlFor="copies">Number of <u>c</u>opies:</label>
              <Spinner>
                <SpinField id="copies" defaultValue="1" />
                <SpinButtons>
                  <SpinButton type="button" aria-label="More"><SpinMark up /></SpinButton>
                  <SpinButton type="button" aria-label="Fewer"><SpinMark /></SpinButton>
                </SpinButtons>
              </Spinner>
            </CopiesRow>
            <CollateRow>
              <Choice $off><Check disabled defaultChecked /><span>C<u>o</u>llate</span></Choice>
              <PageStacks><CollatedPages /><CollatedPages /></PageStacks>
            </CollateRow>
          </CopiesGroup>
        </Bottom>
      </TabPanel>
      <Footer>
        <PushButton type="submit" $default><u>P</u>rint</PushButton>
        <PushButton type="button">Cancel</PushButton>
      </Footer>
    </DialogBody>
  </Dialog>
);

export default function App() {
  return (
    <Page>
      <GlobalStyle />
      <TitleBar>
        <Icon name="onenote" />
        <Title>HW #05 - Microsoft Office OneNote</Title>
        <CaptionButtons>
          <CaptionButton type="button" aria-label="Minimize" $tone="pale">
            <svg width="12" height="12" viewBox="0 0 12 12"><path d="M1 10h7" stroke="#fff" strokeWidth="3" /></svg>
          </CaptionButton>
          <CaptionButton type="button" aria-label="Restore" $tone="pale">
            <svg width="12" height="12" viewBox="0 0 12 12">
              <path d="M4 4V1.500h6.500V8H8M1.500 5.500h6v5h-6zM1 5h7M4 1h7" fill="none" stroke="#e4ecfc" strokeWidth="1.500" />
            </svg>
          </CaptionButton>
          <CaptionButton type="button" aria-label="Close" $tone="dull">
            <svg width="12" height="12" viewBox="0 0 12 12"><path d="m1 1 10 10M11 1 1 11" stroke="#fff" strokeWidth="2" /></svg>
          </CaptionButton>
        </CaptionButtons>
      </TitleBar>
      <MainToolbar />
      <Workspace>
        <Paper aria-label="Note page">
          <Handwriting />
        </Paper>
        <ScrollBar>
          <ScrollButton type="button" aria-label="Scroll up"><Chevron up /></ScrollButton>
          <ScrollTrack>
            <TrackGap $share={92} />
            <ScrollThumb>
              <svg width="8" height="8" viewBox="0 0 8 8"><path d="M0 .500h7M0 2.500h7M0 4.500h7M0 6.500h7" stroke="#8fa9e4" /></svg>
            </ScrollThumb>
            <TrackGap $share={130} />
          </ScrollTrack>
          <ScrollButton type="button" aria-label="Scroll down"><Chevron /></ScrollButton>
          <ScrollButton type="button" aria-label="Add page">
            <svg width="12" height="14" viewBox="0 0 12 14">
              <path d="M2 7V1h6l2 2v4M0 8h12" fill="#fff" stroke="#44506a" />
              <path d="m6 13-3-3h2V9h2v1h2z" fill="#3a6cd8" />
            </svg>
          </ScrollButton>
        </ScrollBar>
        <PrintDialog />
      </Workspace>
      <DrawToolbar />
      <TaskBar>
        <StartButton type="button"><Windows />start</StartButton>
        <TaskButton type="button"><Icon name="onenote" />HW #05 - Microsoft ...</TaskButton>
      </TaskBar>
    </Page>
  );
}
